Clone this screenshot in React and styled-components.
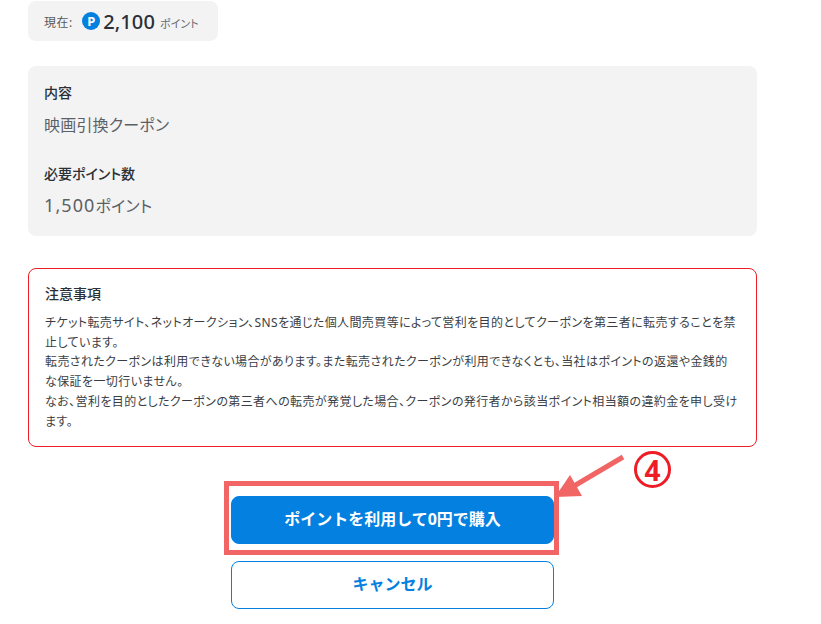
import React from "react";
import styled, { createGlobalStyle } from "styled-components";

const Global = createGlobalStyle`
  html, body { margin: 0; padding: 0; background: #fff; }
  body { font-family: "Noto Sans", "Noto Sans CJK JP", sans-serif; color: #2b2f36; }
`;
const Page = styled.div`
  position: relative;
  width: 821px;
  height: 624px;
  overflow: hidden;
  box-sizing: border-box;
  padding: 1px 0 0 28px;
`;
const Column = styled.div`
  width: 729px;
  display: flex;
  flex-direction: column;
`;
const Balance = styled.div`
  align-self: flex-start;
  width: 190px;
  height: 40px;
  box-sizing: border-box;
  background: #f3f3f3;
  border-radius: 8px;
  padding-left: 16px;
  display: flex;
  align-items: center;
`;
const BalanceLabel = styled.span`
  font-size: 12px;
  letter-spacing: 0.5px;
  color: #555a60;
  margin-right: 9.5px;
  margin-top: 2px;
`;
const PointBadge = styled.span`
  width: 18px;
  height: 18px;
  border-radius: 50%;
  background: #0480e0;
  color: #fff;
  font-size: 13px;
  font-weight: 700;
  display: flex;
  align-items: center;
  justify-content: center;
  margin-right: 3px;
`;
const BalanceValue = styled.span`
  font-size: 20px;
  font-weight: 500;
  letter-spacing: 0.1px;
  color: #2b2f36;
  margin-right: 5px;
`;
const BalanceUnit = styled.span`
  font-size: 11px;
  font-feature-settings: "palt";
  color: #666b72;
  margin-top: 3px;
`;
const InfoCard = styled.section`
  margin-top: 25px;
  height: 170px;
  box-sizing: border-box;
  background: #f3f3f3;
  border-radius: 8px;
  padding: 17px 16px 0;
`;
const InfoLabel = styled.div`
  font-size: 14px;
  font-weight: 500;
  line-height: 20px;
  font-feature-settings: "palt";
  color: #2b2f36;
`;
const InfoValue = styled.div`
  font-size: 16px;
  line-height: 24px;
  height: 24px;
  margin-top: 10px;
  margin-bottom: 27px;
  font-feature-settings: "palt";
  letter-spacing: 0.2px;
  color: #5b6066;
`;
const Digits = styled.span`
  font-size: 18px;
  line-height: 1;
  letter-spacing: 1.1px;
`;
const Notice = styled.section`
  margin-top: 32px;
  height: 179px;
  box-sizing: border-box;
  border: 1px solid #ee1c25;
  border-radius: 8px;
  padding: 15px 18px 0 16px;
`;
const NoticeTitle = styled.div`
  font-size: 14px;
  font-weight: 500;
  line-height: 20px;
  margin-bottom: 9px;
`;
const NoticeText = styled.p`
  margin: 0;
  font-size: 12px;
  line-height: 19.7px;
  font-feature-settings: "palt";
  letter-spacing: 0.4px;
  color: #3a3e44;
`;
const Actions = styled.div`
  margin-top: 49px;
  display: flex;
  flex-direction: column;
  align-items: center;
  gap: 17px;
`;
const Button = styled.button`
  width: 323px;
  height: 48px;
  box-sizing: border-box;
  border-radius: 8px;
  border: 1px solid #0480e0;
  background: ${p => (p.$primary ? "#0480e0" : "#fff")};
  color: ${p => (p.$primary ? "#fff" : "#0480e0")};
  font-family: inherit;
  font-size: 16px;
  font-weight: 700;
  padding: 0 0 4px;
`;
const Highlight = styled.div`
  position: absolute;
  left: 224px;
  top: 481px;
  width: 335px;
  height: 74px;
  box-sizing: border-box;
  border: 5px solid #f16565;
`;
const Arrow = styled.svg`
  position: absolute;
  left: 550px;
  top: 448px;
  width: 80px;
  height: 56px;
`;
const StepNumber = styled.div`
  position: absolute;
  left: 634px;
  top: 451px;
  width: 37px;
  height: 37px;
  box-sizing: border-box;
  border: 3px solid #ee1c25;
  border-radius: 50%;
  color: #ee1c25;
  font-size: 28px;
  font-weight: 700;
  display: flex;
  align-items: center;
  justify-content: center;
`;

export default function App() {
  return (
    <Page>
      <Global />
      <Column>
        <Balance>
          <BalanceLabel>現在:</BalanceLabel>
          <PointBadge>P</PointBadge>
          <BalanceValue>2,100</BalanceValue>
          <BalanceUnit>ポイント</BalanceUnit>
        </Balance>
        <InfoCard>
          <InfoLabel>内容</InfoLabel>
          <InfoValue>映画引換クーポン</InfoValue>
          <InfoLabel>必要ポイント数</InfoLabel>
          <InfoValue><Digits>1,500</Digits>ポイント</InfoValue>
        </InfoCard>
        <Notice>
          <NoticeTitle>注意事項</NoticeTitle>
          <NoticeText>
            チケット転売サイト、ネットオークション、SNSを通じた個人間売買等によって営利を目的としてクーポンを第三者に転売することを禁止しています。
            <br />
            転売されたクーポンは利用できない場合があります。また転売されたクーポンが利用できなくとも、当社はポイントの返還や金銭的な保証を一切行いません。
            <br />
            なお、営利を目的としたクーポンの第三者への転売が発覚した場合、クーポンの発行者から該当ポイント相当額の違約金を申し受けます。
          </NoticeText>
        </Notice>
        <Actions>
          <Button $primary>ポイントを利用して0円で購入</Button>
          <Button>キャンセル</Button>
        </Actions>
      </Column>
      <Highlight />
      <Arrow viewBox="0 0 80 56">
        <line x1="73" y1="9" x2="24" y2="38" stroke="#f16565" strokeWidth="5" />
        <polygon points="5,49 20,27 32,48" fill="#f16565" />
      </Arrow>
      <StepNumber>4</StepNumber>
    </Page>
  );
}
